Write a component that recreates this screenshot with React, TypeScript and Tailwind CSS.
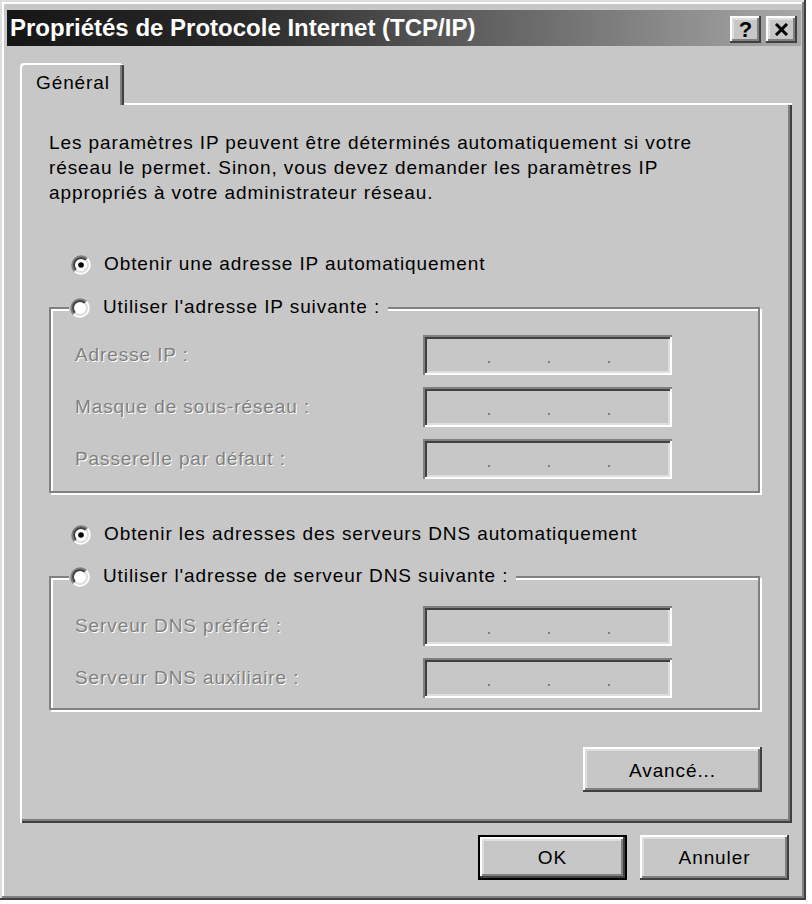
import React from 'react';

const font = { fontFamily: '"Liberation Sans", Arial, sans-serif' };

// 3D edges, Windows 2000 style (greyscale)
const raised =
  'shadow-[inset_-2px_-2px_0_#404040,inset_2px_2px_0_#ffffff,inset_-4px_-4px_0_#808080,inset_4px_4px_0_#dedede]';
const raisedDefault =
  'shadow-[inset_0_0_0_2px_#000000,inset_-4px_-4px_0_#404040,inset_4px_4px_0_#ffffff,inset_-6px_-6px_0_#808080,inset_6px_6px_0_#dedede]';
const sunken =
  'shadow-[inset_2px_2px_0_#808080,inset_-2px_-2px_0_#ffffff,inset_4px_4px_0_#404040,inset_-4px_-4px_0_#dedede]';

function Radio({ checked }: { checked?: boolean }) {
  return (
    <svg width="20" height="20" viewBox="0 0 20 20" className="shrink-0">
      <circle cx="10" cy="10" r="8" fill="#ffffff" />
      <path d="M3.64 16.36 A9 9 0 0 1 16.36 3.64" fill="none" stroke="#808080" strokeWidth="2" />
      <path d="M16.36 3.64 A9 9 0 0 1 3.64 16.36" fill="none" stroke="#ffffff" strokeWidth="2" />
      <path d="M5.05 14.95 A7 7 0 0 1 14.95 5.05" fill="none" stroke="#404040" strokeWidth="2" />
      <path d="M14.95 5.05 A7 7 0 0 1 5.05 14.95" fill="none" stroke="#dedede" strokeWidth="2" />
      {checked && <circle cx="10" cy="10" r="2.8" fill="#000000" />}
    </svg>
  );
}

function RadioRow({ label, checked }: { label: string; checked?: boolean }) {
  return (
    <div className="flex h-[25px] items-center gap-[13px]">
      <Radio checked={checked} />
      <span className="whitespace-nowrap">{label}</span>
    </div>
  );
}

function IpField() {
  return (
    <div className={`flex h-[40px] w-[249px] gap-[58px] pt-[26px] pl-[65px] ${sunken}`}>
      <span className="size-[2px] bg-[#808080]" />
      <span className="size-[2px] bg-[#808080]" />
      <span className="size-[2px] bg-[#808080]" />
    </div>
  );
}

function FieldRow({ label }: { label: string }) {
  return (
    <div className="flex items-center">
      <span className="w-[348px] whitespace-nowrap text-[#808080] [text-shadow:1px_1px_0_#ffffff]">
        {label}
      </span>
      <IpField />
    </div>
  );
}

function GroupBox({
  legend,
  rows,
  fieldsTop,
  bottom,
}: {
  legend: string;
  rows: string[];
  fieldsTop: string;
  bottom: string;
}) {
  return (
    <div
      className={`w-[711px] border-2 border-[#808080] shadow-[inset_2px_2px_0_#ffffff,2px_2px_0_#ffffff] ${bottom}`}
    >
      <div className="-mt-[14px] ml-[18px] w-fit bg-[#c7c7c7] pr-[8px] pl-[1px]">
        <RadioRow label={legend} />
      </div>
      <div className={`flex flex-col gap-[12px] pl-[24px] ${fieldsTop}`}>
        {rows.map((r) => (
          <FieldRow key={r} label={r} />
        ))}
      </div>
    </div>
  );
}

function CaptionButton({ children }: { children: React.ReactNode }) {
  return (
    <div
      className={`flex h-[27px] w-[31px] items-center justify-center bg-[#c7c7c7] text-black ${raised}`}
    >
      {children}
    </div>
  );
}

export default function App() {
  return (
    <div className="min-h-screen bg-white text-[19px] tracking-[0.9px] text-black" style={font}>
      <div className="flex h-[900px] w-[806px] flex-col bg-[#c7c7c7] pt-[10px] pr-[5px] pl-[7px] shadow-[inset_-2px_-2px_0_#404040,inset_2px_2px_0_#dedede,inset_-4px_-4px_0_#808080,inset_4px_4px_0_#ffffff]">
        {/* Title bar */}
        <div className="flex h-[36px] items-start bg-[linear-gradient(to_right,#161616_0%,#2a2a2a_30%,#a8a8a8_100%)] pr-[4px] pl-[3px]">
          <span className="mt-[3px] text-[24px] leading-[30px] font-bold tracking-normal whitespace-nowrap text-white">
            Propriétés de Protocole Internet (TCP/IP)
          </span>
          <div className="ml-auto flex gap-[5px] pt-[6px]">
            <CaptionButton>
              <span className="text-[22px] leading-none font-bold tracking-normal">?</span>
            </CaptionButton>
            <CaptionButton>
              <svg width="15" height="13" viewBox="0 0 15 13">
                <path d="M2 1 L13 12 M13 1 L2 12" stroke="#000" strokeWidth="3" />
              </svg>
            </CaptionButton>
          </div>
        </div>

        <div className="mr-[9px] ml-[13px] flex flex-col">
          {/* Tab strip */}
          <div className="relative z-10 mt-[17px] -mb-[2px] flex h-[42px] w-[104px] items-start rounded-t-[4px] bg-[#c7c7c7] pt-[7px] pl-[16px] shadow-[inset_2px_2px_0_#ffffff,inset_-2px_0_0_#404040,inset_-4px_0_0_#808080]">
            <span className="leading-[25px]">Général</span>
          </div>

          {/* Panel */}
          <div className="flex h-[720px] w-[772px] flex-col pt-[27px] pl-[29px] shadow-[inset_2px_2px_0_#ffffff,inset_-2px_-2px_0_#404040,inset_-4px_-4px_0_#808080]">
            <p className="leading-[25px] whitespace-nowrap">
              Les paramètres IP peuvent être déterminés automatiquement si votre
              <br />
              réseau le permet. Sinon, vous devez demander les paramètres IP
              <br />
              appropriés à votre administrateur réseau.
            </p>

            <div className="mt-[47px] ml-[22px]">
              <RadioRow label="Obtenir une adresse IP automatiquement" checked />
            </div>

            <div className="mt-[30px]">
              <GroupBox
                legend="Utiliser l'adresse IP suivante :"
                rows={['Adresse IP :', 'Masque de sous-réseau :', 'Passerelle par défaut :']}
                fieldsTop="mt-[15px]"
                bottom="pb-[12px]"
              />
            </div>

            <div className="mt-[29px] ml-[22px]">
              <RadioRow label="Obtenir les adresses des serveurs DNS automatiquement" checked />
            </div>

            <div className="mt-[29px]">
              <GroupBox
                legend="Utiliser l'adresse de serveur DNS suivante :"
                rows={['Serveur DNS préféré :', 'Serveur DNS auxiliaire :']}
                fieldsTop="mt-[17px]"
                bottom="pb-[10px]"
              />
            </div>

            <div className="mt-[37px] flex w-[713px] justify-end">
              <div className={`flex h-[45px] w-[179px] items-center justify-center pt-[3px] ${raised}`}>
                Avancé...
              </div>
            </div>
          </div>

          {/* Dialog buttons */}
          <div className="mt-[12px] flex justify-end gap-[13px] pr-[3px]">
            <div
              className={`flex h-[45px] w-[149px] items-center justify-center pt-[2px] ${raisedDefault}`}
            >
              OK
            </div>
            <div className={`flex h-[45px] w-[149px] items-center justify-center pt-[2px] ${raised}`}>
              Annuler
            </div>
          </div>
        </div>
      </div>
    </div>
  );
}
